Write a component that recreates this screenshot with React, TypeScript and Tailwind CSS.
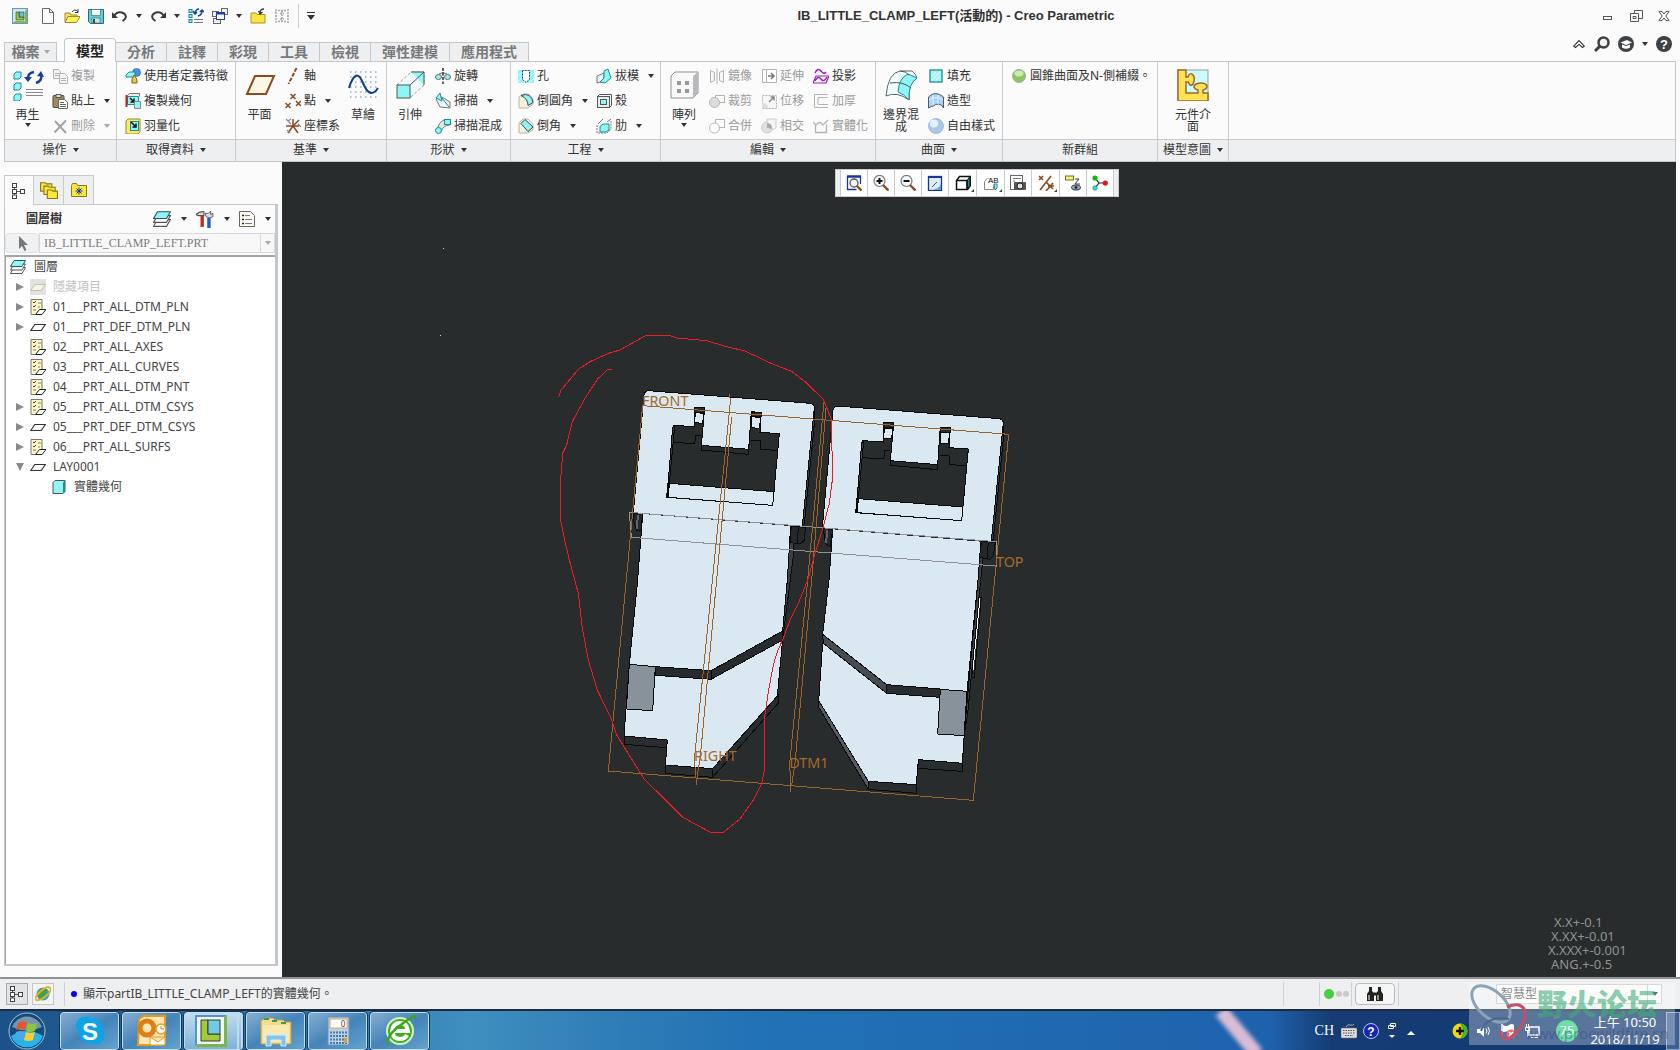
import { useState } from "react";
import type { ReactNode } from "react";

const C = "#8ff5f7";
const T = "#1b8d94";
const K = "#3a3a3a";
const G = "#b4b4b4";
const B = "#8a4b22";

// 16x16 drawings, looked up by name
const ART: Record<string, ReactNode> = {
  creo: <><rect x="0.5" y="0.5" width="15" height="15" fill="#cfe6ee" stroke="#5f9cc9" /><path d="M1 15L15 1V15Z" fill="#86b94a" /><rect x="3" y="3" width="10" height="10" fill="#eaf3ea" /><path d="M4 4h3v5h5v3H4Z" fill="#9cc63b" stroke="#2d4d2d" strokeWidth=".7" /><rect x="7.500" y="4" width="4.500" height="5" fill="#62c3d8" stroke="#2d4d5d" strokeWidth=".7" /></>,
  file: <path d="M2.500 .5h7l4 4v11h-11ZM9.500 .5v4h4" fill="#fff" stroke="#666" />,
  open: <><path d="M1 14V5h5l1 2h6v2" fill="#f4e36b" stroke="#a08a20" /><path d="M1 14.500L4 8.500h12L12.500 14.500Z" fill="#fdf160" stroke="#a08a20" /><path d="M8 4q3-4 6 0M14 1v3.500h-3" fill="none" stroke={K} /></>,
  save: <><path d="M.5 1.500h15v14h-13l-2-2Z" fill="#5ccdd6" stroke="#2b6c74" /><rect x="3.500" y="1.500" width="9" height="6" fill="#f2fbfb" stroke="#2b6c74" strokeWidth=".6" /><rect x="4" y="10" width="8" height="5" fill="#d9dede" stroke="#2b6c74" strokeWidth=".6" /><rect x="5" y="11" width="2" height="4" fill="#2b4c54" /></>,
  undo: <><path d="M2 8q3-5 8-3.500q5 2 3.500 5.500q-.5 1.500-3 3" fill="none" stroke={K} strokeWidth="2" /><path d="M0 4v6h6Z" fill={K} /></>,
  redo: <><path d="M14 8q-3-5-8-3.500q-5 2-3.500 5.500q.5 1.500 3 3" fill="none" stroke={K} strokeWidth="2" /><path d="M16 4v6h-6Z" fill={K} /></>,
  regenSmall: <><g fill={C} stroke={T}><rect x="1" y="1.500" width="3" height="3" /><rect x="1" y="6.500" width="3" height="3" /><rect x="1" y="11.500" width="3" height="3" /></g><path d="M7 5q1-4 4-4M14 3q0 4-4 5M5 3l2 3 2-2M12 4l2-2 2 2" fill="none" stroke="#173f9c" strokeWidth="1.500" /><path d="M6 11.500h9M6 14.500h9" stroke="#777" /></>,
  windows: <><rect x=".5" y="3.500" width="6" height="5" fill="#eee" stroke="#666" /><rect x="9.500" y=".5" width="6" height="6" fill="#eee" stroke="#666" /><rect x="1.500" y="10.500" width="7" height="5" fill="#eee" stroke="#666" /><rect x="4.500" y="4.500" width="8" height="7" fill="#fff" stroke="#1d3f9c" /><path d="M4 5.500h9" stroke="#1d3f9c" strokeWidth="2" /></>,
  folder: <><path d="M1 15V5h5l1 1.500h8V15Z" fill="#fbe63c" stroke="#a79322" /><path d="M10 5q0-4 4-4M8.500 3l1.500 3 2.500-2" fill="none" stroke={K} strokeWidth="1.300" /></>,
  erase: <path d="M4 2.500h8M4 13.500h8M6 5.500h4M6 11h4M8 3v10M2 1v14M14 1v14M1 3h1M1 8h2M13 8h2" fill="none" stroke="#a8a8a8" strokeWidth="1.500" strokeDasharray="2 1" />,
  copy: <g fill="#f3f3f3" stroke={G}><path d="M1.500 1.500h5l2 2v7h-7ZM3 5.500h4M3 7.500h4" /><path d="M7.500 5.500h5l3 3v7h-8ZM9 10.500h5M9 12.500h5" /></g>,
  paste: <><rect x="1" y="2.500" width="11" height="12" rx="1" fill="#a08b5c" stroke="#5b4a2a" /><path d="M4 4.500V1.500h5v3Z" fill="#ddd" stroke="#555" /><path d="M6.500 6.500h6l3 2.500v6.500h-9ZM8 9.500h4M8 11.500h6M8 13.500h6" fill="#fff" stroke="#666" /></>,
  del: <path d="M3 3L14 15M14 2.500L2.500 14.500" stroke="#a3a3a3" strokeWidth="2" />,
  udf: <><circle cx="11.500" cy="4.500" r="4" fill="#4a8ef0" stroke="#2255aa" strokeWidth=".6" /><path d="M1 7l3-3h6v5H1Z" fill={C} stroke={T} /><path d="M7 15q-1-4 2-8q4 4 3 8Z" fill="#e9cb4a" stroke="#7c661a" /></>,
  copyGeom: <><path d="M2.500 2.500l2-2h10v3" fill="#eee" stroke="#777" /><path d="M2.500 3.500h11v8h-11Z" fill={C} stroke={T} /><path d="M1.500 2v12" stroke="#c02020" strokeWidth="2" /><path d="M5 5l4 4M9 5.500V9H5.500" stroke="#111" fill="none" strokeWidth="1.500" /><path d="M9.500 8.500h6v7h-6Z" fill={C} stroke="#888" /></>,
  shrink: <><path d="M1 3l2-2h12v13l-2 2H1Z" fill="#fbe96b" stroke="#a3861c" /><rect x="5.500" y="3.500" width="8" height="9" fill={C} stroke={T} /><path d="M6 4l5 5M11 5.500V9H7.500" stroke="#111" fill="none" strokeWidth="1.500" /></>,
  axis: <path d="M11.500 0L3.500 16" stroke={B} strokeWidth="2" strokeDasharray="4 1.500" />,
  point: <path d="M5.500 1l5 5M10.500 1l-5 5M.5 10l5 5M5.500 10l-5 5M11 8l5 5M16 8l-5 5" stroke={B} strokeWidth="1.500" />,
  csys: <><path d="M1 8h13M8 8l6-6M8 8l5 7M8 8L3 15M8 8L8 1" stroke={B} strokeWidth="1.500" /><path d="M1 1l5 5M6 1L3 3M13 6l3 3M2 12l3 3" stroke="#888" strokeWidth="1.200" /></>,
  revolve: <><ellipse cx="3.500" cy="9" rx="3" ry="2.500" fill={C} stroke="#666" /><ellipse cx="12.500" cy="9" rx="3" ry="2.500" fill={C} stroke="#666" /><path d="M4 6q4-3 8 0" fill="none" stroke="#666" /><path d="M8 0v16" stroke="#111" strokeWidth="1.300" strokeDasharray="3 1.500" /></>,
  sweep: <><path d="M1 6l6-2 8 5v6L5 14Z" fill="#e8f6f6" stroke="#777" /><path d="M5 0L1 5l6 3Z" fill={C} stroke={T} /><path d="M7 5l7 9" stroke={T} /></>,
  blend: <><path d="M2 14q1-10 7-12h6v5q-7 0-9 7Z" fill="#dfe8e8" stroke="#777" /><rect x="9.500" y="1.500" width="6" height="5" fill={C} stroke={T} /><circle cx="3.500" cy="12.500" r="3" fill={C} stroke={T} /></>,
  hole: <><rect x="0" y="2" width="16" height="13" fill={C} /><path d="M0 8l6-6M0 14L10 3M6 15L16 5M11 15l5-5" stroke="#d9fdfd" /><path d="M4.500 2.500v9l3.500 3 3.500-3v-9Z" fill="#fff" stroke="#123d9c" strokeDasharray="2 1" /></>,
  round: <><path d="M1 4l4-3h6l4 5v5l-5 4H1Z" fill="#f3f0dd" stroke="#bcb89c" /><path d="M3 2.500q5-2 8 0 4 3 4 7l-5 3q0-7-7-10Z" fill={C} stroke="#445" /></>,
  chamfer: <><path d="M1 5l4-4h5l5 5v6l-5 3H1Z" fill="#f3f0dd" stroke="#bcb89c" /><path d="M7 1.500L15 9l-5 4.500L3 5.500Z" fill={C} stroke="#445" /></>,
  draft: <><path d="M1 8l7-3v8l-7 2Z" fill="#e4f7f7" stroke="#777" /><path d="M8 3l4-2 3 9-6 5-5-1 4-4Z" fill={C} stroke={T} /></>,
  shell: <><rect x="1.500" y="3.500" width="12" height="11" fill="#e8eded" stroke="#555" /><path d="M1.500 3.500l2-2h12v11l-2 2" fill="none" stroke="#555" /><rect x="4.500" y="6.500" width="6" height="5" fill={C} stroke="#555" /></>,
  rib: <><path d="M1 7v8h10l4-4V3" fill="none" stroke="#777" strokeDasharray="2 1" /><path d="M4 8.500l3-2.500h6v6l-3 2H4Z" fill={C} stroke={T} /><path d="M2 6l5-5M11 4l4-3" stroke="#777" /></>,
  mirror: <path d="M1.500 2.500v12l4-2v-8ZM14.500 2.500v12l-4-2v-8ZM8 0v16" fill="#f6f6f6" stroke={G} />,
  trim: <><rect x="6.500" y="2.500" width="9" height="7" fill="#fff" stroke={G} /><circle cx="5.500" cy="9.500" r="5" fill="#dcdcdc" stroke={G} /></>,
  merge: <><rect x="6.500" y="1.500" width="9" height="8" fill="#fff" stroke={G} /><circle cx="5.500" cy="10" r="5" fill="#fff" stroke={G} /></>,
  extend: <><path d="M1.500 1.500h14v13h-14ZM5.500 1.500v13" fill="#fff" stroke={G} /><path d="M7 8h5M10 5l3 3-3 3" fill="none" stroke="#777" strokeWidth="1.500" /></>,
  offset: <><path d="M1.500 2.500h14v13h-14Z" fill="#f7f7f7" stroke={G} strokeDasharray="2 1" /><path d="M1 10q6 0 6 5H1Z" fill="#ddd" /><path d="M8 9l5-5M9.500 4H13v3.500" fill="none" stroke="#888" strokeWidth="1.500" /></>,
  intersect: <><circle cx="6" cy="9.500" r="5.500" fill="#e0e0e0" stroke="#ccc" /><path d="M6 1h9v9l-4 2q0-6-5-7Z" fill="#f4f4f4" stroke="#ccc" /><path d="M6 5q5 0 5 6l-5-1Z" fill="#aaa" /></>,
  project: <g fill="none" stroke="#9c1fb5" strokeWidth="1.500"><path d="M2 5q3-6 6-2t5 1" /><path d="M3 8h13l-3 7H0Z" strokeWidth="1.200" /><path d="M2 13q3-6 6-2t6-2" /></g>,
  thicken: <path d="M15 1.500H1.500v13H15M15 4.500H5v7h10" fill="none" stroke={G} />,
  solidify: <path d="M2.500 6.500v8h11v-8M0 4l3 3q4-5 7 0l5-5" fill="none" stroke={G} strokeWidth="1.300" />,
  fill: <><rect x="2" y="2" width="12" height="12" fill="#a8f3f3" stroke={T} strokeWidth="1.300" /><path d="M4 12l8-8M4 8l4-4M8 12l4-4" stroke="#e5ffff" /></>,
  style: <><path d="M.5 4q7-7 15 0v11q-2-4-5-4t-5 2q-2 0-5 2Z" fill="#a9d3f3" stroke="#556" /><path d="M5 2v10M10 2v9M1 7q7-5 14 0" stroke="#e6f4ff" fill="none" /></>,
  freestyle: <><circle cx="8" cy="8" r="7.500" fill="#a9c8ea" stroke="#7d9dc4" strokeWidth=".6" /><circle cx="6" cy="5.500" r="4" fill="#e6f1fb" /></>,
  greenDot: <><circle cx="8" cy="8" r="6.500" fill="#8dc55f" stroke="#9ab08b" /><ellipse cx="8" cy="5.500" rx="4.500" ry="3" fill="#cfe8ba" /></>,
  zoomFit: <><path d="M1.500 1v13.500h9M14.500 1v8" fill="none" stroke="#15379c" strokeWidth="1.300" /><path d="M1 1.500h14" stroke="#15379c" strokeWidth="2.500" /><circle cx="8" cy="8" r="4" fill="#f4f8f8" stroke="#555" strokeWidth="1.300" /><path d="M11 11l4.500 4.500" stroke="#8a4b22" strokeWidth="2.400" /></>,
  zoomIn: <><circle cx="6.500" cy="6" r="5.500" fill="#f4f8f8" stroke="#777" strokeWidth="1.200" /><path d="M3.500 6h6M6.500 3v6" stroke="#111" strokeWidth="2" /><path d="M10 10l5.500 5.500" stroke="#8a4b22" strokeWidth="2.400" /></>,
  zoomOut: <><circle cx="6.500" cy="6" r="5.500" fill="#f4f8f8" stroke="#777" strokeWidth="1.200" /><path d="M3.500 6h6" stroke="#111" strokeWidth="2" /><path d="M10 10l5.500 5.500" stroke="#8a4b22" strokeWidth="2.400" /></>,
  repaint: <><rect x="1.500" y="1.500" width="13" height="14" fill="#dcecf8" stroke="#15379c" strokeWidth="1.300" /><path d="M1 2h14" stroke="#15379c" strokeWidth="2" /><path d="M6 15q8-2 8-8v8Z" fill="#6d9fd8" /><path d="M5 12l5-5" stroke="#456" /></>,
  shaded: <><path d="M1.500 5.500l3-4h11v9l-3 4h-11Z" fill="#fff" stroke="#111" strokeWidth="1.500" /><path d="M12 5.500l3-4v9l-3 4Z" fill={T} stroke="#111" /><path d="M1.500 5.500h10.500v9" fill="none" stroke="#111" strokeWidth="1.500" /></>,
  views: <><path d="M4 3.500L1.500 6.500v8h9v-4M4.500 3.500h1" fill="none" stroke="#888" /><path d="M11 9h3v4l-2 2Z" fill={C} stroke={T} /><text x="5" y="7.500" fontSize="8" fill="#111" fontFamily="Liberation Sans, sans-serif">AB</text></>,
  camera: <><rect x=".5" y=".5" width="12" height="14" fill="#fff" stroke="#666" /><path d="M3 3.500h8M3 6h2" stroke="#777" /><rect x="4" y="7" width="12" height="8" rx="1" fill="#555" /><circle cx="10" cy="11" r="3" fill="#ddd" stroke="#222" /></>,
  datum: <path d="M1 1l4 4M5 1L1 5M13 1L2 15M8 7l7 7M15 8l-7 8M10 11h6" fill="none" stroke={B} strokeWidth="1.600" />,
  annot: <><rect x=".5" y="1" width="8" height="4" fill="#fcf27c" stroke="#776a20" /><path d="M10 4h4l-4 5h5" fill="none" stroke="#333" /><ellipse cx="11" cy="12.500" rx="4.500" ry="2.500" fill="#8aa6b8" stroke="#333" /><circle cx="11" cy="12.500" r="1.300" fill="#123" /></>,
  spin: <><path d="M3 3l4 5-4 5M7 8h7" fill="none" stroke="#222" strokeWidth="1.200" /><circle cx="3" cy="3" r="2.600" fill="#0db90d" /><circle cx="3" cy="13" r="2.300" fill="#2ad6e6" stroke="#177" strokeWidth=".5" /><circle cx="13.300" cy="8" r="2.600" fill="#e21515" /></>,
  treeNav: <><path d="M3.500 3v11M3.500 8.500h7" stroke="#555" /><g fill="#fff" stroke="#444"><rect x="1.500" y=".5" width="4" height="4" /><rect x="1.500" y="6.500" width="4" height="4" /><rect x="1.500" y="12" width="4" height="3.500" /><rect x="9.500" y="6.500" width="4" height="4" /></g></>,
  folders: <g fill="#fbe63c" stroke="#8a7a20"><path d="M.5 9V1.500h4l1 1h5V9Z" /><path d="M3.500 12V4.500h4l1 1h5V12Z" /><path d="M6.500 15.500V8h4l1 1h4v6.500Z" /></g>,
  favFolder: <><path d="M.5 14.500V3.500l1-2h4l1 2h9v11Z" fill="#fbe63c" stroke="#8a7a20" /><path d="M8 5.500v7M4.500 9h7M5.500 6.500l5 5M10.500 6.500l-5 5" stroke="#1432a8" /></>,
  layers: <><path d="M4 8.500h11.500l-3.500 6H.5Z" fill="#fff" stroke="#555" /><path d="M4 5h11.500l-3.500 6H.5Z" fill="#fff" stroke="#555" /><path d="M4 1.500h11.500l-3.500 6H.5Z" fill={C} stroke="#2a5a60" /></>,
  tools: <><path d="M0 4q3-3 7-2.500V5H2Z" fill="#ddd" stroke="#555" /><path d="M5.500 5v10" stroke="#b3321f" strokeWidth="3" /><path d="M8 3h3l2-2v3l2-1v3l-3 1-3-1Z" fill="#ddd" stroke="#555" strokeWidth=".8" /><path d="M11.500 7v9" stroke="#1f5fc0" strokeWidth="3" /></>,
  list: <><path d="M.5 .5h11l4 4v11H.5Z" fill="#fbfbf2" stroke="#666" /><path d="M6 4.500h5M6 8.500h7M6 12.500h7" stroke="#777" /><path d="M3 4.500h2M3 8.500h2M3 12.500h2" stroke="#222" strokeWidth="1.500" /></>,
  cursor: <path d="M5 1v13l3-3 2.500 5 2-1-2.500-5H14Z" fill="#777" />,
  rule: <><path d="M1 .5h11v10l-6 5H1Z" fill="#fdf9c4" stroke="#777" /><path d="M3 3l1 1 2-2M3 7l1 1 2-2" stroke="#a02020" fill="none" /><path d="M8 4h3M8 8h2M3 11h3" stroke="#777" /><path d="M5.500 15.500l4-5h6.500l-4 5Z" fill="#fff" stroke="#222" /></>,
  plane: <path d="M.8 11.500l4-6h10.500l-4 6Z" fill="#fff" stroke="#333" strokeWidth="1.200" />,
  planeOff: <><rect width="16" height="16" fill="#e2e2e2" /><path d="M.8 11.500l4-6h10.500l-4 6Z" fill="#f4f3e4" stroke="#c4c2a8" /></>,
  solid: <><path d="M2 3.500l2-2h10v11l-2 2H2Z" fill={C} stroke="#555" /><path d="M12 3.500l2-2v11l-2 2Z" fill={T} /></>,
  browser: <><circle cx="8" cy="8" r="6.500" fill="#2e9de0" /><path d="M4 4q4-3 8-1l-2 6-4 5-3-4Z" fill="#48a03a" /><path d="M1 14q-2-3 5-9t9-3-4 8-10 4" fill="none" stroke="#e6b41d" strokeWidth="2" /></>,
  binoculars: <><path d="M2 1h3v4l2 2v8H0V8l2-3ZM11 1h3v4l2 3v7H9V7l2-2Z" fill="#222" /><path d="M2 9v5M11 9v5" stroke="#b9b996" strokeWidth="1.500" /><path d="M7 8h2" stroke="#222" strokeWidth="3" /></>,
  caretUp: <path d="M2 10.500L8 4l6 6.500-2 1.500L8 8.500 4 12Z" fill="#fff" stroke="#333" strokeWidth="1.300" />,
  search: <><circle cx="9.500" cy="6.500" r="5" fill="#eef3f8" stroke="#3f3f3f" strokeWidth="2.500" /><path d="M6 10l-5 5" stroke="#3f3f3f" strokeWidth="3" /></>,
  learn: <><circle cx="8" cy="8" r="8" fill="#3f4245" /><path d="M2.500 6.500L9 4l5 2.500L8 9ZM4 8.500v3q4 2.500 8 0v-3L8 10Z" fill="#fff" /></>,
  help: <><circle cx="8" cy="8" r="8" fill="#3f4245" /><text x="8" y="12.500" fontSize="13" fontWeight="bold" textAnchor="middle" fill="#fff" fontFamily="Liberation Sans, sans-serif">?</text></>,
  minimize: <rect x="3.500" y="8.500" width="8" height="3" fill="#fff" stroke="#555" />,
  restore: <g fill="#fff" stroke="#555"><path d="M6.500 2.500h8v8h-8Z" /><path d="M2.500 5.500h8v8h-8Z" /><path d="M5 8.500h3v2H5Z" /></g>,
  close: <path d="M3 3.500h3l2 2.500 2-2.500h3L9.800 8l3.200 4.500h-3L8 10l-2 2.500H3L6.200 8Z" fill="#fff" stroke="#555" />,
  keyboard: <><path d="M5 4q1-3 4-2t4-1" fill="none" stroke="#aaa" /><rect x="0" y="5" width="16" height="10" rx="1" fill="#ddd" stroke="#777" strokeWidth=".6" /><path d="M2 7.500h12M2 10h12M4 12.500h8" stroke="#555" strokeDasharray="1.500 1" /></>,
  imeHelp: <><circle cx="8" cy="8" r="7.500" fill="#1626b4" stroke="#b9c4ee" /><text x="8" y="12.500" fontSize="12" fontWeight="bold" textAnchor="middle" fill="#fff" fontFamily="Liberation Sans, sans-serif">?</text></>,
  shield: <><circle cx="8" cy="8" r="7.500" fill="#f3d80c" /><path d="M8 .5a7.500 7.500 0 0 1 0 15q6-7 0-15" fill="#46b32a" /><path d="M8 4v8M4 8h8" stroke="#111" strokeWidth="2.500" /></>,
  speaker: <><path d="M1 6h3l4-4v12L4 10H1Z" fill="#fff" /><path d="M10 5.500q2 2.500 0 5M12 4q3 4 0 8" fill="none" stroke="#fff" /></>,
  flag: <><path d="M2 1v14" stroke="#fff" strokeWidth="1.500" /><path d="M3 2q3 2 6 0t5 0v7q-3 1-5 0t-6 0Z" fill="#fff" /><circle cx="11" cy="11" r="4.500" fill="#d62a2a" /><path d="M9 9l4 4M13 9l-4 4" stroke="#fff" strokeWidth="1.500" /></>,
  network: <><rect x="5" y="4" width="10" height="8" fill="#26477c" stroke="#fff" strokeWidth="1.500" /><path d="M7 14.500h7M2.500 1v3M4.500 1v3M1.500 4.500h4v3h-4ZM3.500 8v6" stroke="#fff" fill="none" /></>,
};

function Icon({ name, className = "size-4" }: { name: string; className?: string }) {
  return (
    <svg viewBox="0 0 16 16" className={`${className} shrink-0`} aria-hidden="true">
      {ART[name]}
    </svg>
  );
}

function Caret({ dim = false }: { dim?: boolean }) {
  return (
    <svg viewBox="0 0 6 4" className="h-1 w-1.5 shrink-0" aria-hidden="true">
      <path d="M0 0h6L3 4Z" fill={dim ? "#a8a8a8" : "#333"} />
    </svg>
  );
}

function Small({ icon, label, caret, off }: { icon: string; label: string; caret?: boolean; off?: boolean }) {
  return (
    <button disabled={off} className="flex h-[25px] items-center gap-[3px] whitespace-nowrap text-xs text-[#333] disabled:text-[#9b9b9b]">
      <Icon name={icon} />
      <span>{label}</span>
      {caret && <span className="ml-1.5"><Caret dim={off} /></span>}
    </button>
  );
}

function Col({ className = "", children }: { className?: string; children: ReactNode }) {
  return <div className={`flex shrink-0 flex-col items-start ${className}`}>{children}</div>;
}

function Big({ label, caret, className = "w-[46px]", children }: { label: string; caret?: boolean; className?: string; children: ReactNode }) {
  return (
    <button className={`flex shrink-0 flex-col items-center pt-1.5 text-xs leading-3 text-[#333] ${className}`}>
      <svg viewBox="0 0 32 32" className="mb-2 size-8" aria-hidden="true">{children}</svg>
      <span className="w-9">{label}</span>
      {caret && <span className="mt-0.5"><Caret /></span>}
    </button>
  );
}

function Group({ label, caret = true, className, children }: { label: string; caret?: boolean; className: string; children?: ReactNode }) {
  return (
    <section className={`flex flex-col border-r border-[#c8cacd] ${className}`}>
      <div className="flex h-[77px] items-start pt-px">{children}</div>
      <button className="flex h-[22px] items-center justify-center gap-1.5 border-t border-[#c8cacd] bg-[#eeeff1] pb-0.5 text-xs text-[#333]">
        {label}
        {caret && <Caret />}
      </button>
    </section>
  );
}

function Ribbon() {
  return (
    <div className="mx-1 flex border border-[#c4c6c9] bg-[#fbfbfb]">
      <Group label="操作" className="w-[112px]">
        <Big label="再生" caret className="w-[45px]">
          <g fill={C} stroke={T}><path d="M2 5l2-2h5v5l-2 2H2ZM2 16l2-2h5v5l-2 2H2ZM2 27l2-2h5v5l-2 2H2Z" /></g>
          <path d="M16 11q-1-7 6-8M29 5q2 7-5 9" fill="none" stroke="#173f9c" strokeWidth="2.500" />
          <path d="M12 8l4 5 4-5ZM25 7l4-5 3 6Z" fill="#173f9c" />
          <path d="M14 20.500h17M14 23.500h17M14 26.500h17" stroke="#888" />
        </Big>
        <Col className="pl-0.5">
          <Small icon="copy" label="複製" off />
          <Small icon="paste" label="貼上" caret />
          <Small icon="del" label="刪除" caret off />
        </Col>
      </Group>
      <Group label="取得資料" className="w-[119px]">
        <Col className="pl-2">
          <Small icon="udf" label="使用者定義特徵" />
          <Small icon="copyGeom" label="複製幾何" />
          <Small icon="shrink" label="羽量化" />
        </Col>
      </Group>
      <Group label="基準" className="w-[151px]">
        <Big label="平面" className="w-[47px]">
          <path d="M11 7h19l-8 18H3Z" fill="#fdf7e4" stroke={B} strokeWidth="2" />
        </Big>
        <Col className="w-[57px] pl-0.5">
          <Small icon="axis" label="軸" />
          <Small icon="point" label="點" caret />
          <Small icon="csys" label="座標系" />
        </Col>
        <Big label="草繪">
          <path d="M3 3h28M3 8h28M3 13h28M3 18h28M3 23h28M3 28h28" stroke="#8ab0cc" strokeWidth="1.500" strokeDasharray="1.500 3.500" />
          <path d="M2 19Q9-3 16 14t15 5" fill="none" stroke="#123f8f" strokeWidth="2" />
        </Big>
      </Group>
      <Group label="形狀" className="w-[124px]">
        <Big label="引伸">
          <path d="M3 16L17 3h13v13L16 29" fill="#f2fbfb" stroke="#999" strokeDasharray="3 2" />
          <path d="M17 3h13v13Z" fill={C} /><path d="M17 3h13v13M16 16L30 3" fill="none" stroke="#555" />
          <rect x="3" y="16" width="13" height="13" fill={C} stroke="#555" />
        </Big>
        <Col className="pl-0.5">
          <Small icon="revolve" label="旋轉" />
          <Small icon="sweep" label="掃描" caret />
          <Small icon="blend" label="掃描混成" />
        </Col>
      </Group>
      <Group label="工程" className="w-[150px]">
        <Col className="w-[85px] pl-[7px]">
          <Small icon="hole" label="孔" />
          <Small icon="round" label="倒圓角" caret />
          <Small icon="chamfer" label="倒角" caret />
        </Col>
        <Col>
          <Small icon="draft" label="拔模" caret />
          <Small icon="shell" label="殼" />
          <Small icon="rib" label="肋" caret />
        </Col>
      </Group>
      <Group label="編輯" className="w-[215px]">
        <Big label="陣列" caret>
          <path d="M3 7l4-4h23v21l-5 5H3Z" fill="#fafafa" stroke="#8f8f8f" />
          <path d="M25 7l5-4v21l-5 5Z" fill="#b9b9bd" />
          <g fill="#999"><rect x="9" y="12" width="4" height="4" /><rect x="17" y="12" width="4" height="4" /><rect x="9" y="20" width="4" height="4" /><rect x="17" y="20" width="4" height="4" /></g>
        </Big>
        <Col className="w-[54px] pl-0.5">
          <Small icon="mirror" label="鏡像" off />
          <Small icon="trim" label="裁剪" off />
          <Small icon="merge" label="合併" off />
        </Col>
        <Col className="w-[52px]">
          <Small icon="extend" label="延伸" off />
          <Small icon="offset" label="位移" off />
          <Small icon="intersect" label="相交" off />
        </Col>
        <Col>
          <Small icon="project" label="投影" />
          <Small icon="thicken" label="加厚" off />
          <Small icon="solidify" label="實體化" off />
        </Col>
      </Group>
      <Group label="曲面" className="w-[127px]">
        <Big label="邊界混成" className="w-[50px]">
          <path d="M1 27Q3 4 15 2h12q4 3 5 7-9 4-8 22Q12 22 1 27Z" fill="#f0fdfd" stroke="#666" />
          <path d="M13 23q1-14 10-18l9 4q-9 6-8 22-5-6-11-8Z" fill={C} stroke={T} />
          <path d="M5 14q13-2 21 5M15 2q6 0 9 4" fill="none" stroke="#555" />
        </Big>
        <Col className="pl-0.5">
          <Small icon="fill" label="填充" />
          <Small icon="style" label="造型" />
          <Small icon="freestyle" label="自由樣式" />
        </Col>
      </Group>
      <Group label="新群組" caret={false} className="w-[155px]">
        <Col className="pl-2">
          <Small icon="greenDot" label="圓錐曲面及N-側補綴。" />
        </Col>
      </Group>
      <Group label="模型意圖" className="w-[71px]">
        <Big label="元件介面" className="w-full">
          <rect x="1" y="1" width="30" height="30" fill="#c9fbff" stroke="#999" />
          <path d="M1 1h8v7h2q1-4 4-3 3 2 2 7-1 5-4 4l-2-3H9v11h12v-3q-4-1-4-4 2-3 7-3 5 0 6 3 0 3-4 4v3h5v8H1Z" fill="#fbe355" stroke="#a0682a" strokeWidth="1.500" />
        </Big>
      </Group>
      <div className="flex flex-1 flex-col">
        <div className="h-[77px]" />
        <div className="h-[22px] border-t border-[#c8cacd] bg-[#eeeff1]" />
      </div>
    </div>
  );
}

function TitleBar() {
  const bar = "flex items-center";
  return (
    <header className="flex h-8 items-center">
      <div className={`${bar} w-[312px] gap-2 pl-3`}>
        <Icon name="creo" />
        <span className="-ml-1 h-6 w-px bg-[#d0d0d0]" />
        <button aria-label="新建"><Icon name="file" /></button>
        <button aria-label="開啟"><Icon name="open" /></button>
        <button aria-label="儲存"><Icon name="save" /></button>
        <button aria-label="復原" className={`${bar} gap-2`}><Icon name="undo" /><Caret /></button>
        <button aria-label="重做" className={`${bar} gap-2`}><Icon name="redo" /><Caret /></button>
        <button aria-label="再生"><Icon name="regenSmall" /></button>
        <button aria-label="視窗" className={`${bar} gap-2`}><Icon name="windows" /><Caret /></button>
        <button aria-label="關閉"><Icon name="folder" /></button>
        <button aria-label="拭除"><Icon name="erase" /></button>
        <span className="h-6 w-px shrink-0 bg-[#d0d0d0]" />
        <button aria-label="自訂" className="border-t border-[#333] pt-0.5"><svg viewBox="0 0 8 5" className="h-[5px] w-2"><path d="M0 0h8L4 5Z" fill="#333" /></svg></button>
      </div>
      <h1 className="flex-1 text-center font-[Liberation_Sans,Noto_Sans_CJK_TC,sans-serif] text-[13px] font-bold text-[#333]">IB_LITTLE_CLAMP_LEFT(活動的) - Creo Parametric</h1>
      <div className={`${bar} gap-3 pr-2`}>
        <button aria-label="最小化"><Icon name="minimize" /></button>
        <button aria-label="還原"><Icon name="restore" /></button>
        <button aria-label="關閉視窗"><Icon name="close" /></button>
      </div>
    </header>
  );
}

const TABS = ["模型", "分析", "註釋", "彩現", "工具", "檢視", "彈性建模", "應用程式"];

function TabRow() {
  const [tab, setTab] = useState("模型");
  return (
    <nav className="relative z-10 -mb-px flex h-[30px] items-end pl-1 text-sm font-bold text-[#77797b]">
      <button className="mr-[7px] flex h-5 w-[53px] items-center justify-center gap-1 border border-[#c4c6c9] bg-[#eeeff1]">
        檔案<Caret dim />
      </button>
      {TABS.map((t) => (
        <button
          key={t}
          onClick={() => setTab(t)}
          className={
            t === tab
              ? "h-6 rounded-t-sm border border-b-0 border-[#c4c6c9] bg-[#fbfbfb] px-[11px] leading-5 text-[#222]"
              : "h-5 border-y border-r border-[#c4c6c9] bg-[#eeeff1] px-[11px] leading-4"
          }
        >
          {t}
        </button>
      ))}
      <div className="ml-auto flex h-6 items-center gap-2 self-start pr-2">
        <button aria-label="收合功能區"><Icon name="caretUp" className="size-3.5" /></button>
        <button aria-label="搜尋"><Icon name="search" /></button>
        <button aria-label="學習" className="flex items-center gap-2"><Icon name="learn" /><Caret /></button>
        <button aria-label="說明"><Icon name="help" /></button>
      </div>
    </nav>
  );
}

type Row = { label: string; icon: string; open?: boolean; off?: boolean; child?: boolean };

const LAYERS: Row[] = [
  { label: "隱藏項目", icon: "planeOff", open: false, off: true },
  { label: "01___PRT_ALL_DTM_PLN", icon: "rule", open: false },
  { label: "01___PRT_DEF_DTM_PLN", icon: "plane", open: false },
  { label: "02___PRT_ALL_AXES", icon: "rule" },
  { label: "03___PRT_ALL_CURVES", icon: "rule" },
  { label: "04___PRT_ALL_DTM_PNT", icon: "rule" },
  { label: "05___PRT_ALL_DTM_CSYS", icon: "rule", open: false },
  { label: "05___PRT_DEF_DTM_CSYS", icon: "plane", open: false },
  { label: "06___PRT_ALL_SURFS", icon: "rule", open: false },
  { label: "LAY0001", icon: "plane", open: true },
  { label: "實體幾何", icon: "solid", child: true },
];

function Sidebar() {
  return (
    <aside className="flex w-[282px] shrink-0 flex-col pt-[13px] pr-1 pb-[11px] pl-1">
      <div className="relative z-10 -mb-px flex">
        <button aria-label="模型樹" className="flex h-[30px] w-[30px] items-center justify-center border border-b-0 border-[#c8cacd] bg-[#fbfbfb]"><Icon name="treeNav" /></button>
        <button aria-label="資料夾瀏覽器" className="flex h-[30px] w-[30px] items-center justify-center border-y border-r border-[#c8cacd] bg-[#eeeff1]"><Icon name="folders" className="size-[18px]" /></button>
        <button aria-label="我的最愛" className="flex h-[30px] w-[30px] items-center justify-center border-y border-r border-[#c8cacd] bg-[#eeeff1]"><Icon name="favFolder" /></button>
      </div>
      <div className="flex flex-1 flex-col border-t border-r-[3px] border-b-2 border-l border-[#c4c7ca]">
        <div className="flex h-7 items-center gap-[9px] pr-1 pl-[21px]">
          <h2 className="mr-auto text-xs font-bold text-[#333]">圖層樹</h2>
          <button aria-label="層" className="flex items-center gap-2.5"><Icon name="layers" className="size-[18px]" /><Caret /></button>
          <button aria-label="設定" className="flex items-center gap-2.5"><Icon name="tools" className="size-[18px]" /><Caret /></button>
          <button aria-label="顯示" className="flex items-center gap-2.5"><Icon name="list" /><Caret /></button>
        </div>
        <div className="flex h-5 items-stretch">
          <button aria-label="選取" className="flex w-[34px] items-center justify-center rounded-sm border border-[#e0e1e3] bg-[#f0f1f2]"><Icon name="cursor" /></button>
          <div className="relative flex flex-1 border border-[#d6d8da] bg-[#f8f8f8]">
            <select aria-label="目前模型" disabled className="w-full appearance-none pl-1 font-[Liberation_Serif,serif] text-xs leading-4 text-[#7c7c7c] opacity-100">
              <option>IB_LITTLE_CLAMP_LEFT.PRT</option>
            </select>
            <span className="pointer-events-none absolute inset-y-0 right-0 flex w-3.5 items-center justify-center border-l border-[#d6d8da]"><Caret dim /></span>
          </div>
        </div>
        <ul className="mt-0.5 flex-1 border-t-2 border-l border-[#a3a6a9] bg-white text-xs text-[#444]">
          <li className="flex h-5 items-center gap-2 pl-1"><Icon name="layers" />圖層</li>
          {LAYERS.map((r) => (
            <li key={r.label} className={`flex h-5 items-center ${r.child ? "pl-[45px]" : "pl-2.5"} ${r.off ? "text-[#c2c2c2]" : ""}`}>
              {!r.child && (
                <span className="flex w-3.5 items-center">
                  {r.open !== undefined && (
                    <svg viewBox="0 0 8 8" className="size-2" aria-hidden="true">
                      <path d={r.open ? "M0 0h8L4 8Z" : "M0 0l8 4-8 4Z"} fill="#8a8a8a" />
                    </svg>
                  )}
                </span>
              )}
              <Icon name={r.icon} />
              <span className="pl-[7px]">{r.label}</span>
            </li>
          ))}
        </ul>
      </div>
    </aside>
  );
}

// One clamp head with its window; both halves share it.
function Head() {
  return (
    <g stroke="#0a0a0a" strokeWidth="3" fill="#282c2d">
      <path d="M823 262V310L793 612 787 617Z" fill="#3b4144" />
      <path d="M312 224Q314 214 325 212L812 250Q823 253 823 264L787 617 280 577Z" fill="#dae8f2" stroke="none" />
      <path d="M280 577L312 224Q314 214 325 212L812 250Q823 253 823 264L787 617" fill="none" />
      <path d="M400 316L462 320 462 262 494 264 484 376 626 388 634 275 664 278 660 337 718 341 698 556 380 532Z" />
      <path d="M463 262h31v14h-31ZM634 276h30v14h-30Z" />
      <path d="M466 278L491 280 488 310 464 308ZM636 290L662 293 658 325 634 323Z" fill="#dae8f2" />
      <path d="M388 490L702 515 698 556 385 532Z" fill="#dae8f2" />
      <path d="M404 318L388 490 381 532 398 322Z" fill="#3b4144" />
      <path d="M402 367L464 371 468 345 484 347M484 376V390L626 403V388M632 360L660 362V387L714 392" fill="none" />
    </g>
  );
}

function Model() {
  return (
    <svg viewBox="0 0 1500 1590" className="absolute top-[158px] left-[258px] h-[530px] w-[500px]" shapeRendering="crispEdges" role="img" aria-label="IB_LITTLE_CLAMP_LEFT">
      <g stroke="#0a0a0a" strokeWidth="3" fill="#dae8f2">
        <path d="M752 618L762 690 728 960 726 935Z" fill="#3b4144" />
        <path d="M308 582L752 618 742 780 728 933 513 1052 268 1033 293 780Z" stroke="none" />
        <path d="M308 582L293 780 268 1033M752 618L742 780 728 933" fill="none" />
        <path d="M268 1033L346 1040 513 1078 728 958 712 1128 518 1346 376 1336 382 1260 252 1248Z" />
        <path d="M346 1040L513 1052 728 933V960L513 1078 346 1066ZM513 1052V1078" fill="#282b2e" />
        <path d="M268 1033L346 1040 338 1172 259 1167Z" fill="#88929a" />
        <path d="M252 1248L382 1260 380 1283 252 1273ZM376 1335L518 1346V1372L376 1360ZM518 1346L714 1126V1150L518 1372Z" fill="#2a2d30" />

        <path d="M1323 665L1330 700 1283 1180 1272 1250 1314 780Z" fill="#3b4144" />
        <path d="M878 628L1323 665 1314 780 1281 1114 1040 1094 848 943 867 780Z" stroke="none" />
        <path d="M878 628L867 780 848 943M1323 665L1314 780 1281 1114" fill="none" />
        <path d="M848 968L1040 1118 1281 1114 1267 1332 1135 1319 1129 1394 985 1384 836 1142Z" />
        <path d="M848 943L1040 1094 1040 1120 850 970Z" fill="#474c50" />
        <path d="M1040 1094L1201 1107 1200 1132 1040 1120Z" fill="#2a2d30" />
        <path d="M1201 1108L1281 1114 1272 1247 1193 1242Z" fill="#88929a" />
        <path d="M836 1142L985 1384V1408L836 1162Z" fill="#555b60" />
        <path d="M1136 1319L1267 1330V1354L1133 1345ZM985 1384L1130 1394V1420L985 1408Z" fill="#2a2d30" />
        <path d="M1318 832h6L1303 1072h-8Z" fill="#282c2d" />
        <path d="M1320 834L1299 1050" stroke="#fff" />
      </g>
      <Head />
      <g transform="translate(567 46)"><Head /></g>
      <g stroke="#0a0a0a" strokeWidth="3" fill="#24282a">
        <path d="M280 580L308 582 303 632H290L282 610Z" />
        <path d="M754 618L797 622 792 662 780 672 750 668ZM775 622L772 668" />
        <path d="M850 626L878 628 870 680 856 670Z" />
        <path d="M1325 665L1366 667 1360 708 1348 718 1318 712ZM1345 668L1341 715" />
        <path d="M294 584L290 628M862 630L858 668" stroke="#5a6468" strokeWidth="6" />
      </g>
      <path d="M268 577L1368 665V738L274 652Z" fill="none" stroke="#8f9194" strokeWidth="3" />
      <g fill="none" stroke="#9c6428" strokeWidth="3">
        <path d="M308 257L1406 343 1300 1441 205 1353Z" />
        <path d="M569 222L571 245 463 1320 470 1395M575 290L481 1310 470 1380" />
        <path d="M852 245L803 780 749 1330 753 1415M858 265L815 780 765 1330 755 1395" />
      </g>
      <g fill="#a66b2c" fontFamily="Noto Sans, sans-serif" fontSize="43">
        <text x="306" y="258">FRONT</text>
        <text x="1368" y="740">TOP</text>
        <text x="462" y="1323">RIGHT</text>
        <text x="748" y="1344">DTM1</text>
      </g>
      <path
        d="M56 232L62 212 115 148 150 125 205 100 240 90 318 46H388L410 54 500 62 560 80 615 93 700 133 755 154 795 185 850 238 875 300 877 480 868 550 850 620 825 700 805 775 775 850 750 900 730 955 712 995 700 1035 686 1110 674 1190V1345L665 1390 640 1440 600 1497 550 1537H512L480 1520 430 1493 385 1448 313 1378 255 1285 230 1245 213 1195 172 1110 145 1020 127 925 115 820 88 720 75 665 62 600V480L68 400 80 375 97 305 135 235 172 178 203 148H216"
        fill="none" stroke="#ed1c24" strokeWidth="3"
      />
    </svg>
  );
}

const VIEW_TOOLS = [
  { name: "zoomFit", label: "重新調整" },
  { name: "zoomIn", label: "放大" },
  { name: "zoomOut", label: "縮小" },
  { name: "repaint", label: "重新繪製" },
  { name: "shaded", label: "顯示樣式", menu: true },
  { name: "views", label: "已儲存方位", menu: true },
  { name: "camera", label: "視圖管理器" },
  { name: "datum", label: "基準顯示", menu: true },
  { name: "annot", label: "註釋顯示" },
  { name: "spin", label: "旋轉中心" },
];

function Viewport() {
  return (
    <main className="relative mr-1 flex-1 overflow-hidden bg-[#282c2d]">
      <Model />
      <span className="absolute top-[86px] left-[161px] size-px bg-[#d0d0d0]" />
      <span className="absolute top-[173px] left-[158px] size-px bg-[#d0d0d0]" />
      <div className="absolute inset-x-0 top-[7px] flex justify-center pr-1">
        <div className="flex h-7 gap-px border border-[#c8cacd] bg-[#c8cacd]">
          <span className="w-1 bg-[#eeeff1]" />
          {VIEW_TOOLS.map((t) => (
            <button key={t.name} aria-label={t.label} className={`relative flex items-center justify-center bg-white ${t.menu ? "w-[27px]" : "w-[26px]"}`}>
              <Icon name={t.name} />
              {t.menu && (
                <svg viewBox="0 0 3 3" className="absolute right-0.5 bottom-1 size-[3px]" aria-hidden="true"><path d="M3 0v3H0Z" fill="#444" /></svg>
              )}
            </button>
          ))}
          <span className="w-1 bg-[#eeeff1]" />
        </div>
      </div>
      <div className="absolute right-[51px] bottom-1.5 w-[77px] text-[13px] leading-[14px] whitespace-nowrap text-[#8f9292]">
        <p className="pl-1.5">X.X+-0.1</p>
        <p className="pl-[3px]">X.XX+-0.01</p>
        <p>X.XXX+-0.001</p>
        <p className="pl-[3px]">ANG.+-0.5</p>
      </div>
    </main>
  );
}

function StatusBar() {
  const sep = "h-6 w-px bg-[#cfd0d2]";
  return (
    <footer className="flex h-8 items-center border-t-2 border-[#8f9193] bg-[#eeeff1] pl-1.5 text-xs text-[#444]">
      <button aria-label="導覽器" className="flex size-[22px] items-center justify-center border border-[#a9abad] bg-[#e2e3e5]"><Icon name="treeNav" /></button>
      <button aria-label="瀏覽器" className="ml-1 flex size-[22px] items-center justify-center border border-[#c4c6c9] bg-[#f4f4f5]"><Icon name="browser" /></button>
      <span className={`${sep} ml-2.5`} />
      <span className="mx-1.5 size-1.5 rounded-full bg-[#0000f0]" />
      <p>顯示partIB_LITTLE_CLAMP_LEFT的實體幾何。</p>
      <span className={`${sep} mr-[35px] ml-auto`} />
      <span className={sep} />
      <span className="ml-1 size-2.5 rounded-full bg-[#45cf45]" />
      <span className="ml-0.5 size-1.5 rounded-full bg-[#cacaca]" />
      <span className="mr-0.5 ml-px size-1.5 rounded-full bg-[#cacaca]" />
      <span className={sep} />
      <button aria-label="尋找" className="mx-[3px] flex h-[22px] w-10 items-center justify-center rounded-sm border border-[#b9bbbd] bg-[#f6f6f6]"><Icon name="binoculars" /></button>
      <span className={sep} />
      <div className="relative mr-[18px] ml-[97px] flex h-5 w-[166px] border border-[#c6c8ca] bg-[#fafafa]">
        <select aria-label="選取過濾器" className="w-full appearance-none pl-1 text-xs leading-4 text-[#555]">
          <option>智慧型</option>
        </select>
        <span className="pointer-events-none absolute inset-y-0 right-0 flex w-3.5 items-center justify-center border-l border-[#c6c8ca]"><Caret /></span>
      </div>
    </footer>
  );
}

function TaskButton({ label, active, children }: { label: string; active?: boolean; children: ReactNode }) {
  return (
    <button
      aria-label={label}
      className={`flex h-[38px] w-[59px] items-center justify-center rounded-[3px] border border-[#bcdcf0] outline outline-[#12395e] ${active ? "border-r-[6px] border-double bg-linear-to-b from-[#c3dced] to-[#7fb2d6]" : "bg-linear-to-br from-[#86aed0] via-[#4484ba] to-[#63a3ce]"}`}
    >
      <svg viewBox="0 0 32 32" className="size-8" aria-hidden="true">{children}</svg>
    </button>
  );
}

function Taskbar() {
  return (
    <div className="relative flex h-[41px] items-center overflow-hidden border-t-2 border-[#1c2b40] bg-linear-to-r from-[#1a5189] via-[#2272b6] via-45% to-[#1c55a5] text-white">
      <div className="absolute inset-0 bg-linear-to-r from-[#1a5189] via-[#3f8fc0] via-28% to-transparent to-45%" />
      <div className="absolute top-0 left-[1214px] h-14 w-3.5 origin-top -rotate-[40deg] bg-[#d9bcd6] blur-[2px]" />
      <div className="absolute inset-y-0 right-0 left-[1270px] bg-linear-to-r from-transparent via-[#153c74] via-15% to-[#133972]" />
      <div className="relative flex w-full items-center">
        <button aria-label="開始" className="mx-2">
          <svg viewBox="0 0 38 38" className="size-[38px]" aria-hidden="true">
            <circle cx="19" cy="19" r="18" fill="#174a78" stroke="#9dc4de" />
            <path d="M3 24a17 17 0 0 0 32 0Q19 14 3 24Z" fill="#26b5ea" />
            <path d="M4 15a16 16 0 0 1 30 0Q19 22 4 15Z" fill="#8ea9be" opacity=".8" />
            <path d="M10 11q5-3 9-1l-2 8q-5-2-9 0Z" fill="#e8572a" />
            <path d="M20 11q5 2 9 0l-2 8q-5 2-9 0Z" fill="#8cc63f" />
            <path d="M8 20q4-2 9 0l-2 8q-4-2-9 0Z" fill="#4aa7e8" />
            <path d="M18 20q4 2 9 0l-2 8q-5 2-9 0Z" fill="#fbcb2b" />
          </svg>
        </button>
        <div className="ml-1.5 flex gap-[3px]">
          <TaskButton label="Skype">
            <path d="M10 2q4-1 7 1 12 1 12 13 3 6-1 11-5 4-10 1Q5 28 4 16 0 10 3 6q3-4 7-4Z" fill="#0aa5e8" />
            <text x="16" y="25" fontSize="24" fontWeight="bold" textAnchor="middle" fill="#fff" fontFamily="Liberation Sans, sans-serif">S</text>
          </TaskButton>
          <TaskButton label="Outlook">
            <path d="M3 4l5-3h21v27l-4 2H2Z" fill="#fbe6b4" stroke="#e79a1c" strokeWidth="2" />
            <circle cx="11" cy="13" r="7" fill="none" stroke="#dd7d12" strokeWidth="5" />
            <circle cx="25" cy="14" r="5" fill="#fff" stroke="#e79a1c" strokeWidth="1.500" /><path d="M25 11v3h3" fill="none" stroke="#dd7d12" />
            <path d="M14 22h15v8H14ZL22 27 29 22" fill="#fff" stroke="#e79a1c" />
          </TaskButton>
          <TaskButton label="Creo Parametric" active>
            <path d="M0 0h32v32H0Z" fill="#f4faf8" /><path d="M0 0h32L0 32Z" fill="#4f95cf" /><path d="M32 0v32H0Z" fill="#7bb648" />
            <rect x="2" y="2" width="27" height="27" fill="#f1f6f4" />
            <path d="M6 5h7v14h12v7H6Z" fill="#9fca3c" stroke="#304030" /><rect x="13" y="5" width="12" height="14" fill="#72cbe2" stroke="#304030" />
          </TaskButton>
          <TaskButton label="檔案總管">
            <path d="M1 6l4-3h8l2 2h8l2 2h6v22H1Z" fill="#f4dc8c" stroke="#c29c3c" />
            <path d="M4 4h5M12 6h5M21 8h5" stroke="#3a9c4a" strokeWidth="2" /><path d="M3 10h26v17H3Z" fill="#f9eab2" />
            <path d="M6 31V20h20v11h-5v-6H11v6Z" fill="#86c4ea" stroke="#d5effc" />
          </TaskButton>
          <TaskButton label="小算盤">
            <rect x="6" y="2" width="21" height="28" rx="1" fill="#b9d2e8" stroke="#6b93b8" /><rect x="8" y="4" width="17" height="9" fill="#fff" stroke="#e0a060" />
            <text x="21" y="12" fontSize="8" fill="#345" textAnchor="middle">0</text>
            <path d="M8 17.500h17M8 21h17M8 24.500h17M8 28h17" stroke="#4c78a4" strokeWidth="2" strokeDasharray="2 1" /><rect x="22" y="23" width="3" height="5" fill="#ee9530" />
          </TaskButton>
          <TaskButton label="瀏覽器">
            <circle cx="16" cy="16" r="13" fill="#3fb01c" stroke="#d5f2c4" strokeWidth="2" />
            <path d="M8 16h16q-1-8-8-8t-8 8q1 8 8 8 5 0 7-4" fill="none" stroke="#fff" strokeWidth="4" />
            <path d="M5 30Q0 22 18 9T30 3" fill="none" stroke="#3aa818" strokeWidth="2.500" />
          </TaskButton>
        </div>
        <div className="ml-auto flex items-center">
          <span className="font-[Liberation_Serif,serif] text-sm">CH</span>
          <span className="ml-[7px]"><Icon name="keyboard" /></span>
          <span className="ml-1.5"><Icon name="imeHelp" /></span>
          <svg viewBox="0 0 10 18" className="ml-2 h-[18px] w-2.5" aria-hidden="true"><path d="M3.500 1.500h5v3h-5ZM1.500 3.500h5v3h-5Z" fill="#153c74" stroke="#fff" /><path d="M2 13h6L5 16Z" fill="#fff" /></svg>
          <svg viewBox="0 0 8 4" className="mt-1 mr-[37px] ml-2.5 h-1 w-2" aria-hidden="true"><path d="M0 4h8L4 0Z" fill="#fff" /></svg>
          <span className="mr-2"><Icon name="shield" /></span>
          <span className="mr-2"><Icon name="speaker" /></span>
          <span className="mr-2"><Icon name="flag" /></span>
          <span className="mr-4"><Icon name="network" /></span>
          <span className="mr-3 flex size-[22px] items-center justify-center rounded-full bg-[#2fd07f] text-[13px]">75</span>
          <time className="w-[70px] text-center text-[13px] leading-[17px] whitespace-nowrap">上午 10:50<br />2018/11/19</time>
          <button aria-label="顯示桌面" className="ml-1.5 h-[38px] w-3.5 border border-[#93a9c6] bg-[#3d5f92]" />
        </div>
      </div>
    </div>
  );
}

function Watermark() {
  return (
    <div className="pointer-events-none absolute right-[5px] bottom-[5px] flex h-[62px] w-[206px] bg-white/30">
      <svg viewBox="0 0 60 62" className="h-[62px] w-[60px] shrink-0" aria-hidden="true" fill="none">
        <ellipse cx="22" cy="21" rx="23" ry="13" transform="rotate(42 22 21)" stroke="#8ba3b5" strokeWidth="3" />
        <path d="M12 48Q18 32 40 36" stroke="#47688c" strokeWidth="2" />
        <path d="M38 24q14-6 18 4 2 14-16 28-8 2-8-8" stroke="#c0506c" strokeWidth="3" />
      </svg>
      <div className="-ml-1 pt-0.5 leading-none whitespace-nowrap">
        <p className="pl-3 font-[Noto_Sans_CJK_SC,sans-serif] text-3xl leading-[34px] font-black text-[#3fae76]/60">野火论坛</p>
        <p className="pt-1 text-[15px] leading-5 text-[#2c4a80]/45">www.proewildfire.cn</p>
      </div>
    </div>
  );
}

export default function App() {
  return (
    <div className="relative flex h-screen flex-col overflow-hidden bg-[#fbfbfb] font-[Noto_Sans,Noto_Sans_CJK_TC,sans-serif]">
      <TitleBar />
      <TabRow />
      <Ribbon />
      <div className="flex min-h-0 flex-1">
        <Sidebar />
        <Viewport />
      </div>
      <StatusBar />
      <Taskbar />
      <Watermark />
    </div>
  );
}
